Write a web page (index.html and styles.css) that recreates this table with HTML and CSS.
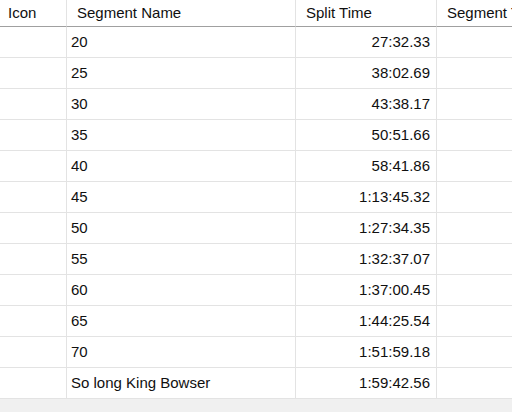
FILE: index.html
```html
<!DOCTYPE html>
<html lang="en">
<head>
  <meta charset="UTF-8" />
  <meta name="viewport" content="width=device-width, initial-scale=1.0"/>
  <title>Splits Editor</title>
  <link rel="stylesheet" href="styles.css">
</head>
<body>
  <div class="grid">
    <div class="cell head">Icon</div>
    <div class="cell head">Segment Name</div>
    <div class="cell head">Split Time</div>
    <div class="cell head">Segment Time</div>

    <div class="cell"></div><div class="cell name">20</div><div class="cell time">27:32.33</div><div class="cell"></div>
    <div class="cell"></div><div class="cell name">25</div><div class="cell time">38:02.69</div><div class="cell"></div>
    <div class="cell"></div><div class="cell name">30</div><div class="cell time">43:38.17</div><div class="cell"></div>
    <div class="cell"></div><div class="cell name">35</div><div class="cell time">50:51.66</div><div class="cell"></div>
    <div class="cell"></div><div class="cell name">40</div><div class="cell time">58:41.86</div><div class="cell"></div>
    <div class="cell"></div><div class="cell name">45</div><div class="cell time">1:13:45.32</div><div class="cell"></div>
    <div class="cell"></div><div class="cell name">50</div><div class="cell time">1:27:34.35</div><div class="cell"></div>
    <div class="cell"></div><div class="cell name">55</div><div class="cell time">1:32:37.07</div><div class="cell"></div>
    <div class="cell"></div><div class="cell name">60</div><div class="cell time">1:37:00.45</div><div class="cell"></div>
    <div class="cell"></div><div class="cell name">65</div><div class="cell time">1:44:25.54</div><div class="cell"></div>
    <div class="cell"></div><div class="cell name">70</div><div class="cell time">1:51:59.18</div><div class="cell"></div>
    <div class="cell"></div><div class="cell name">So long King Bowser</div><div class="cell time">1:59:42.56</div><div class="cell"></div>
  </div>
</body>
</html>
```

FILE: styles.css
```css
:root {
  --grid-line: #e3e3e3;
  --head-line: #a0a0a0;
  --text: #101010;
  --empty-area: #f0f0f0;
}

html, body {
  margin: 0;
  height: 100%;
}

body {
  background: var(--empty-area);
  font-family: "Liberation Sans", Arial, sans-serif;
  font-size: 15px;
  color: var(--text);
  overflow: hidden;
}

.grid {
  display: grid;
  grid-template-columns: 67px 229px 141px 150px;
  grid-template-rows: 27px;
  grid-auto-rows: 31px;
  width: 587px;
  background: #fff;
}

.cell {
  box-sizing: border-box;
  border-right: 1px solid var(--grid-line);
  border-bottom: 1px solid var(--grid-line);
  display: flex;
  align-items: center;
  padding: 0 6px 1px 10px;
  white-space: nowrap;
  overflow: hidden;
}

.cell.head {
  border-bottom-color: var(--head-line);
}

.cell.head:first-child {
  padding-left: 8px;
}

.cell.name {
  padding-left: 4px;
}

.cell.time {
  justify-content: flex-end;
}
```
